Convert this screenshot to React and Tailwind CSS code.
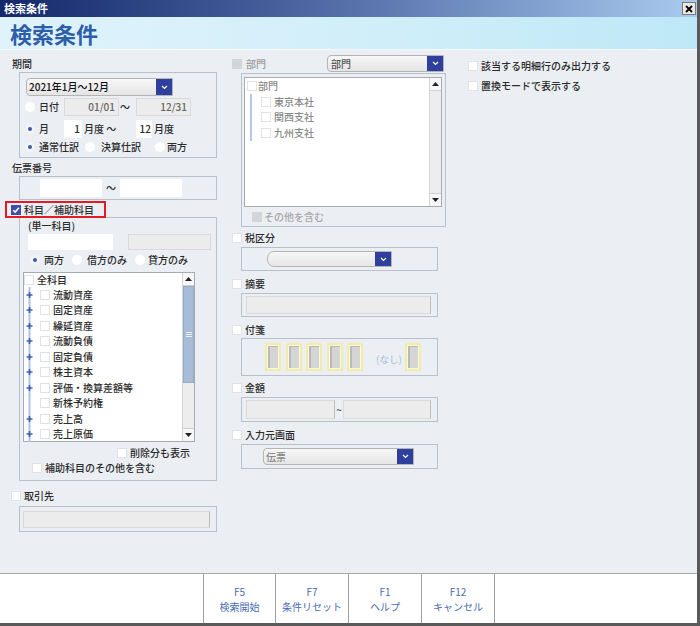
import React from "react";

function Check({ on = false, dis = false }) {
  if (on)
    return (
      <span className="w-[10px] h-[10px] shrink-0 bg-[#3e4fa5] flex items-center justify-center">
        <svg width="8" height="8" viewBox="0 0 8 8">
          <path d="M1.2 4.2 L3.2 6.1 L6.9 1.8" stroke="#fff" strokeWidth="1.5" fill="none" />
        </svg>
      </span>
    );
  if (dis) return <span className="block w-[10px] h-[10px] shrink-0 bg-[#d3d5d8]" />;
  return <span className="block w-[10px] h-[10px] shrink-0 bg-white border border-[#dfe2e6]" />;
}

function Radio({ on = false }) {
  return (
    <span
      className={
        on
          ? "w-[10px] h-[10px] shrink-0 rounded-full bg-[#f1f4f7] flex items-center justify-center"
          : "w-[10px] h-[10px] shrink-0 rounded-full bg-white flex items-center justify-center"
      }
    >
      {on && <span className="w-[4px] h-[4px] rounded-full bg-[#3f56a8]" />}
    </span>
  );
}

function DropBtn() {
  return (
    <span className="w-[16px] self-stretch shrink-0 bg-[#2f3f9d] flex items-center justify-center">
      <svg width="7" height="5" viewBox="0 0 7 5">
        <path d="M1 1 L3.5 3.5 L6 1" stroke="#fff" strokeWidth="1.2" fill="none" />
      </svg>
    </span>
  );
}

function VScroll({ thumb = false }) {
  return (
    <div className="w-[12px] shrink-0 flex flex-col bg-[#ededed] border-l border-[#d4d4d4]">
      <div className="h-[13px] bg-[#f7f7f7] border-b border-[#d0d0d0] flex items-center justify-center">
        <svg width="7" height="4" viewBox="0 0 7 4">
          <path d="M0 4 L3.5 0 L7 4 Z" fill="#222" />
        </svg>
      </div>
      <div className="flex-1 flex flex-col">
        {thumb && (
          <div className="h-[97px] bg-[#a8bbd7] border border-[#97abc9] flex flex-col items-center justify-center gap-[1px]">
            <span className="w-[6px] h-px bg-[#e8eef7]" />
            <span className="w-[6px] h-px bg-[#e8eef7]" />
            <span className="w-[6px] h-px bg-[#e8eef7]" />
          </div>
        )}
      </div>
      <div className="h-[13px] bg-[#f7f7f7] border-t border-[#d0d0d0] flex items-center justify-center">
        <svg width="7" height="4" viewBox="0 0 7 4">
          <path d="M0 0 L3.5 4 L7 0 Z" fill="#222" />
        </svg>
      </div>
    </div>
  );
}

function TreeRow({ label, plus }) {
  return (
    <div className="h-[15.5px] flex items-center">
      <svg width="11" height="16" viewBox="0 0 11 16" className="shrink-0">
        <line x1="5.5" y1="0" x2="5.5" y2="16" stroke="#adc4e6" strokeWidth="2" />
        {plus && <path d="M2.5 8 H8.5 M5.5 5 V11" stroke="#3a63b2" strokeWidth="1.6" />}
      </svg>
      <span className="ml-[5px]">
        <Check />
      </span>
      <span className="ml-[3px]">{label}</span>
    </div>
  );
}

const accounts = [
  ["流動資産", true],
  ["固定資産", true],
  ["繰延資産", true],
  ["流動負債", true],
  ["固定負債", true],
  ["株主資本", true],
  ["評価・換算差額等", true],
  ["新株予約権", false],
  ["売上高", true],
  ["売上原価", true],
];

const keys = [
  ["F5", "検索開始", "w-[72px]"],
  ["F7", "条件リセット", "w-[73px]"],
  ["F1", "ヘルプ", "w-[73px]"],
  ["F12", "キャンセル", "w-[73px]"],
];

function StickyNote() {
  return (
    <div className="w-[16px] h-[28px] shrink-0 border-2 border-[#f1ecaa] bg-[#fbf9dc] p-px">
      <div className="w-full h-full bg-[#d5d5d5] border-l-2 border-t border-[#b9b9b9]" />
    </div>
  );
}

export default function App() {
  return (
    <div className="w-[700px] h-[626px] flex flex-col bg-[#ebeff4] border-r-[3px] border-b-[3px] border-[#5a5a5a] text-[10px] leading-[14px] font-medium text-[#2b2b2b] font-['Noto_Sans_CJK_JP','Noto_Sans',sans-serif] overflow-hidden">
      {/* title bar */}
      <div className="h-[17px] shrink-0 flex items-center justify-between pl-[4px] pr-[1px] bg-linear-to-r from-[#15276a] via-[#5670aa] to-[#aacbef]">
        <span className="text-white font-bold text-[11px] leading-none">検索条件</span>
        <span className="w-[14px] h-[13px] bg-[#ece9e4] border border-[#7b7b7b] flex items-center justify-center">
          <svg width="8" height="8" viewBox="0 0 8 8">
            <path d="M1 1 L7 7 M7 1 L1 7" stroke="#000" strokeWidth="1.8" />
          </svg>
        </span>
      </div>

      {/* header */}
      <div className="h-[33px] shrink-0 flex items-center pl-[10px] bg-linear-to-r from-[#dff3fc] via-[#d2eff9] to-[#bee8f7] border-b border-[#f6f9fb]">
        <span className="text-[22px] font-bold text-[#2e5ea8] leading-none">検索条件</span>
      </div>

      {/* body */}
      <div className="h-[523px] shrink-0 flex">
        {/* left column */}
        <div className="w-[218px] shrink-0 flex flex-col">
          <div className="mt-[6px] h-[16px] pl-[12px] leading-[16px]">期間</div>
          <div className="ml-[19px] w-[198px] h-[86px] border border-[#b9c0c8] flex flex-col">
            <div className="mt-[5px] ml-[6px] w-[147px] h-[18px] flex border border-[#b4b4b4] rounded-l-[4px] bg-linear-to-b from-[#f8f8f8] to-[#e4e4e4]">
              <span className="flex-1 pl-[2px] leading-[16px] text-[#111]">2021年1月～12月</span>
              <DropBtn />
            </div>
            <div className="mt-[2px] h-[18px] flex items-center">
              <span className="ml-[5px]">
                <Radio />
              </span>
              <span className="ml-[4px] w-[25px]">日付</span>
              <span className="w-[55px] h-[18px] bg-[#ececec] border border-[#dadada] text-right pr-[3px] leading-[16px] text-[#666]">01/01</span>
              <span className="w-[17px] pl-[1px]">～</span>
              <span className="w-[55px] h-[18px] bg-[#ececec] border border-[#dadada] text-right pr-[3px] leading-[16px] text-[#666]">12/31</span>
            </div>
            <div className="mt-[4px] h-[18px] flex items-center">
              <span className="ml-[5px]">
                <Radio on />
              </span>
              <span className="ml-[4px] w-[25px]">月</span>
              <span className="w-[18px] h-[18px] bg-white text-right pr-[2px] leading-[18px]">1</span>
              <span className="w-[54px] pl-[2px]">月度 ～</span>
              <span className="w-[16px] h-[18px] bg-white text-right pr-[1px] leading-[18px]">12</span>
              <span className="pl-[2px]">月度</span>
            </div>
            <div className="mt-[2px] h-[14px] flex items-center">
              <span className="ml-[5px]">
                <Radio on />
              </span>
              <span className="ml-[4px] w-[46px]">通常仕訳</span>
              <Radio />
              <span className="ml-[6px] w-[54px]">決算仕訳</span>
              <Radio />
              <span className="ml-[2px]">両方</span>
            </div>
          </div>

          <div className="mt-[2px] h-[16px] pl-[12px] leading-[16px]">伝票番号</div>
          <div className="ml-[19px] w-[198px] h-[24px] border border-[#b9c0c8] flex items-center">
            <span className="ml-[20px] w-[62px] h-[18px] bg-white" />
            <span className="w-[18px] text-center">～</span>
            <span className="w-[62px] h-[18px] bg-white" />
          </div>

          <div className="relative z-10 mt-[1px] ml-[5px] w-[101px] h-[17px] border-2 border-[#e11d23] flex items-center">
            <span className="ml-[4px]">
              <Check on />
            </span>
            <span className="ml-[3px]">科目／補助科目</span>
          </div>
          <div className="-mt-[1px] ml-[19px] w-[198px] h-[264px] border border-[#b9c0c8] flex flex-col">
            <div className="mt-[1px] h-[14px] pl-[8px]">(単一科目)</div>
            <div className="mt-[1px] h-[16px] flex">
              <span className="ml-[8px] w-[85px] bg-white" />
              <span className="ml-[15px] w-[83px] bg-[#ececec] border border-[#dadada]" />
            </div>
            <div className="mt-[3px] h-[14px] flex items-center">
              <span className="ml-[10px]">
                <Radio on />
              </span>
              <span className="ml-[4px] w-[28px]">両方</span>
              <Radio />
              <span className="ml-[5px] w-[48px]">借方のみ</span>
              <Radio />
              <span className="ml-[3px]">貸方のみ</span>
            </div>
            <div className="mt-[5px] ml-[3px] w-[172px] h-[170px] border border-[#a3abb4] bg-white flex">
              <div className="flex-1 flex flex-col">
                <div className="h-[15.5px] flex items-center">
                  <Check />
                  <span className="ml-[3px]">全科目</span>
                </div>
                {accounts.map(([label, plus]) => (
                  <TreeRow key={label} label={label} plus={plus} />
                ))}
              </div>
              <VScroll thumb />
            </div>
            <div className="mt-[4px] h-[14px] flex items-center">
              <span className="ml-[97px]">
                <Check />
              </span>
              <span className="ml-[3px]">削除分も表示</span>
            </div>
            <div className="mt-[1px] h-[14px] flex items-center">
              <span className="ml-[12px]">
                <Check />
              </span>
              <span className="ml-[3px]">補助科目のその他を含む</span>
            </div>
          </div>

          <div className="mt-[8px] h-[14px] flex items-center">
            <span className="ml-[11px]">
              <Check />
            </span>
            <span className="ml-[3px]">取引先</span>
          </div>
          <div className="mt-[3px] ml-[19px] w-[198px] h-[26px] border border-[#b9c0c8] flex items-center">
            <span className="ml-[3px] w-[187px] h-[17px] bg-[#ececec] border border-[#dadada] border-r-[#bcbcbc]" />
          </div>
        </div>

        {/* middle column */}
        <div className="w-[232px] shrink-0 flex flex-col">
          <div className="mt-[5px] h-[17px] flex items-center">
            <span className="ml-[14px]">
              <Check dis />
            </span>
            <span className="ml-[4px] w-[81px] text-[#9c9c9c]">部門</span>
            <div className="w-[117px] h-[17px] flex border border-[#b4b4b4] rounded-l-[4px] bg-linear-to-b from-[#f8f8f8] to-[#e4e4e4]">
              <span className="flex-1 pl-[3px] leading-[15px] text-[#555]">部門</span>
              <DropBtn />
            </div>
          </div>
          <div className="mt-[1px] ml-[23px] w-[205px] h-[154px] border border-[#b9c0c8] flex flex-col">
            <div className="mt-[3px] ml-[2px] w-[198px] h-[130px] border border-[#a3abb4] bg-white flex">
              <div className="flex-1 flex flex-col text-[#8a8a8a]">
                <div className="h-[15px] flex items-center">
                  <span className="ml-[2px]">
                    <Check />
                  </span>
                  <span className="ml-[1px]">部門</span>
                </div>
                <div className="mt-[1px] ml-[5px] border-l-2 border-[#b3c8e8] flex flex-col">
                  {["東京本社", "関西支社", "九州支社"].map((b) => (
                    <div key={b} className="h-[15.5px] flex items-center">
                      <span className="ml-[9px]">
                        <Check />
                      </span>
                      <span className="ml-[3px]">{b}</span>
                    </div>
                  ))}
                </div>
              </div>
              <VScroll />
            </div>
            <div className="mt-[3px] h-[14px] flex items-center text-[#a9a9a9]">
              <span className="ml-[10px]">
                <Check dis />
              </span>
              <span className="ml-[2px]">その他を含む</span>
            </div>
          </div>

          <div className="mt-[4px] h-[14px] flex items-center">
            <span className="ml-[14px]">
              <Check />
            </span>
            <span className="ml-[3px]">税区分</span>
          </div>
          <div className="mt-[2px] ml-[23px] w-[197px] h-[24px] border border-[#b9c0c8] flex items-center">
            <div className="ml-[25px] w-[125px] h-[16px] flex border border-[#b4b4b4] rounded-l-[7px] bg-linear-to-b from-[#f6f6f6] to-[#e6e6e6]">
              <span className="flex-1" />
              <DropBtn />
            </div>
          </div>

          <div className="mt-[6px] h-[14px] flex items-center">
            <span className="ml-[14px]">
              <Check />
            </span>
            <span className="ml-[3px]">摘要</span>
          </div>
          <div className="mt-[2px] ml-[23px] w-[197px] h-[24px] border border-[#b9c0c8] flex items-center">
            <span className="ml-[4px] w-[185px] h-[18px] bg-[#ececec] border border-[#dadada] border-r-[#bcbcbc]" />
          </div>

          <div className="mt-[6px] h-[14px] flex items-center">
            <span className="ml-[14px]">
              <Check />
            </span>
            <span className="ml-[3px]">付箋</span>
          </div>
          <div className="mt-[1px] ml-[23px] w-[197px] h-[38px] border border-[#b9c0c8] flex items-center">
            <div className="ml-[23px] flex gap-[4.5px]">
              <StickyNote />
              <StickyNote />
              <StickyNote />
              <StickyNote />
              <StickyNote />
            </div>
            <span className="ml-[13px] mt-[4px] w-[29px] text-[#b8c6d8] text-[9.5px]">(なし)</span>
            <StickyNote />
          </div>

          <div className="mt-[5px] h-[14px] flex items-center">
            <span className="ml-[14px]">
              <Check />
            </span>
            <span className="ml-[3px]">金額</span>
          </div>
          <div className="mt-[2px] ml-[23px] w-[197px] h-[25px] border border-[#b9c0c8] flex items-center">
            <span className="ml-[4px] w-[89px] h-[19px] bg-[#ececec] border border-[#dadada] border-r-[#bcbcbc]" />
            <span className="w-[8px] text-center">~</span>
            <span className="w-[88px] h-[19px] bg-[#ececec] border border-[#dadada] border-r-[#bcbcbc]" />
          </div>

          <div className="mt-[6px] h-[14px] flex items-center">
            <span className="ml-[14px]">
              <Check />
            </span>
            <span className="ml-[3px]">入力元画面</span>
          </div>
          <div className="mt-[2px] ml-[23px] w-[197px] h-[25px] border border-[#b9c0c8] flex items-center">
            <div className="ml-[21px] w-[151px] h-[17px] flex border border-[#b4b4b4] rounded-l-[4px] bg-linear-to-b from-[#f6f6f6] to-[#e6e6e6]">
              <span className="flex-1 pl-[2px] leading-[15px] text-[#888]">伝票</span>
              <DropBtn />
            </div>
          </div>
        </div>

        {/* right column */}
        <div className="flex-1 flex flex-col">
          <div className="mt-[9px] h-[14px] flex items-center">
            <span className="ml-[18px]">
              <Check />
            </span>
            <span className="ml-[3px]">該当する明細行のみ出力する</span>
          </div>
          <div className="mt-[6px] h-[14px] flex items-center">
            <span className="ml-[18px]">
              <Check />
            </span>
            <span className="ml-[3px]">置換モードで表示する</span>
          </div>
        </div>
      </div>

      {/* footer */}
      <div className="flex-1 bg-white border-t border-[#a8a8a8] flex">
        <div className="w-[204px] border-r border-[#a0a0a0]" />
        {keys.map(([k, label, w]) => (
          <div
            key={k}
            className={`${w} border-r border-[#a0a0a0] flex flex-col items-center justify-center text-[#4a6db0] font-normal text-[10px] leading-[15px]`}
          >
            <span>{k}</span>
            <span>{label}</span>
          </div>
        ))}
      </div>
    </div>
  );
}
